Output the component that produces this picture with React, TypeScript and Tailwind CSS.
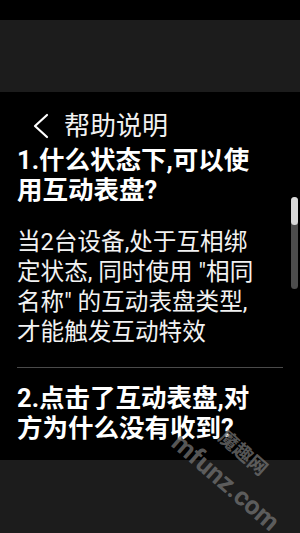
function Chevron() {
  return (
    <svg width="17" height="26" viewBox="0 0 17 26" fill="none" className="shrink-0">
      <path d="M15 2 L3 13 L15 24" stroke="white" strokeWidth="2.2" strokeLinecap="round" strokeLinejoin="round" />
    </svg>
  )
}

export default function App() {
  return (
    <div className="relative w-[300px] h-[533px] overflow-hidden bg-black text-white font-['Roboto','Noto_Sans_CJK_SC',sans-serif]">
      <div className="h-[20px] bg-black" />
      <div className="h-[72px] bg-[#1c1c1c]" />

      <div className="relative h-[368px] bg-black">
        {/* header */}
        <div className="flex items-center pt-[19px] pl-[32px] h-[48px]">
          <Chevron />
          <span className="ml-[15px] text-[26px] leading-[30px] text-[#f2f2f2]">帮助说明</span>
        </div>

        <div className="px-[17px] pt-[5px]">
          <div className="text-[25.5px] leading-[30px] font-bold">
            <div>1.什么状态下,可以使</div>
            <div>用互动表盘?</div>
          </div>

          <div className="mt-[22px] text-[23.6px] leading-[30px] text-[#f2f2f2]">
            <div>当2台设备,处于互相绑</div>
            <div>定状态, 同时使用 "相同</div>
            <div>名称" 的互动表盘类型,</div>
            <div>才能触发互动特效</div>
          </div>

          <div className="mt-[20px] h-px bg-[#4a4a4a]" />

          <div className="mt-[15px] text-[25.5px] leading-[30px] font-bold">
            <div>2.点击了互动表盘,对</div>
            <div>方为什么没有收到?</div>
          </div>
        </div>

        {/* scrollbar */}
        <div className="absolute right-[2px] top-[105px] w-[7px] h-[92px] rounded-full bg-[#4d4d4d]">
          <div className="h-[28px] w-full rounded-full bg-[#d9d9d9]" />
        </div>
      </div>

      <div className="h-[73px] bg-[#1c1c1c]" />

      {/* watermark */}
      <div className="pointer-events-none absolute left-[226px] top-[482px] -translate-x-1/2 -translate-y-1/2 rotate-[41deg] whitespace-nowrap text-[26px] leading-none font-bold text-[#6e6e6e]/80">
        mfunz.com
      </div>
      <div className="pointer-events-none absolute left-[243px] top-[453px] -translate-x-1/2 -translate-y-1/2 rotate-[41deg] whitespace-nowrap text-[19px] leading-none font-bold text-[#6e6e6e]/80">
        魔趣网
      </div>
    </div>
  )
}
